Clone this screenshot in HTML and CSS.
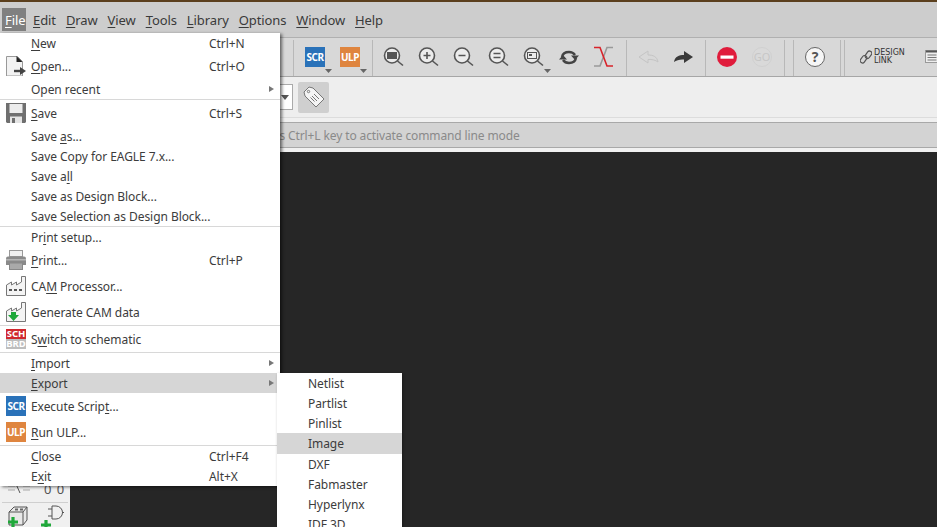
FILE: index.html
```html
<!DOCTYPE html>
<html lang="en">
<head>
<meta charset="utf-8">
<title>EAGLE board editor</title>
<link rel="stylesheet" href="styles.css">
</head>
<body>
<div class="app">
  <div class="topline"></div>
  <nav class="menubar">
    <span class="mb mb-active"><u>F</u>ile</span>
    <span class="mb"><u>E</u>dit</span>
    <span class="mb"><u>D</u>raw</span>
    <span class="mb"><u>V</u>iew</span>
    <span class="mb"><u>T</u>ools</span>
    <span class="mb"><u>L</u>ibrary</span>
    <span class="mb"><u>O</u>ptions</span>
    <span class="mb"><u>W</u>indow</span>
    <span class="mb"><u>H</u>elp</span>
  </nav>
  <div class="toolbar">
    <i class="sep s1"></i>
    <svg class="tb" viewBox="0 0 35 38"><rect x="7" y="9" width="20" height="20" fill="#2a72b9"/><text x="17" y="23" class="t-badge">SCR</text><path d="M27 31h7l-3.500 4z" fill="#666"/></svg>
    <svg class="tb" viewBox="0 0 35 38"><rect x="7" y="9" width="20" height="20" fill="#df853f"/><text x="17" y="23" class="t-badge">ULP</text><path d="M27 31h7l-3.500 4z" fill="#666"/></svg>
    <i class="sep s2"></i>
    <svg class="tb" viewBox="0 0 35 38"><g class="mag"><circle cx="16" cy="17.500" r="7.500"/><path d="M21.500 23l5.500 4.500"/></g><rect x="11" y="14" width="10" height="7" fill="#555"/></svg>
    <svg class="tb" viewBox="0 0 35 38"><g class="mag"><circle cx="16" cy="17.500" r="7.500"/><path d="M21.500 23l5.500 4.500M12.500 17.500h7M16 14v7"/></g></svg>
    <svg class="tb" viewBox="0 0 35 38"><g class="mag"><circle cx="16" cy="17.500" r="7.500"/><path d="M21.500 23l5.500 4.500M12.500 17.500h7"/></g></svg>
    <svg class="tb" viewBox="0 0 35 38"><g class="mag"><circle cx="16" cy="17.500" r="7.500"/><path d="M21.500 23l5.500 4.500M12.500 15.500h7M12.500 19.500h7"/></g></svg>
    <svg class="tb" viewBox="0 0 35 38"><g class="mag"><circle cx="16" cy="17.500" r="7.500"/><path d="M21.500 23l5.500 4.500"/></g><rect x="11.500" y="14.500" width="9" height="6" fill="none" stroke="#555"/><rect x="13" y="16" width="3" height="2" fill="#555"/><path d="M28 31h7l-3.500 4z" fill="#666"/></svg>
    <svg class="tb" viewBox="0 0 35 38"><path d="M11 19q1-5 7-5 4 0 6 3M25 20q-1 5-7 5-4 0-6-3" fill="none" stroke="#444" stroke-width="2.400"/><path d="M20 17.500h8l-4 4.500zM8 21.500h8l-4-4.500z" fill="#444"/></svg>
    <svg class="tb" viewBox="0 0 35 38"><path d="M8 28h6l7-18.500h6" fill="none" stroke="#999" stroke-width="1.600"/><path d="M8 9.500h6l7 18.500h6" fill="none" stroke="#d8232a" stroke-width="1.600"/></svg>
    <i class="sep s3"></i>
    <svg class="tb" viewBox="0 0 35 38"><path d="M8 19l9-6v4c5 0 9 1.500 10 7-2.500-2-6-2.800-10-2.500v3.500z" fill="none" stroke="#c4c4c4"/></svg>
    <svg class="tb" viewBox="0 0 35 38"><path d="M27 19l-9-6v4c-5 0-9 1.500-10 7 2.500-2 6-2.800 10-2.500v3.500z" fill="#3a3a3a"/></svg>
    <i class="sep s4"></i>
    <svg class="tb" viewBox="0 0 35 38"><circle cx="17" cy="19" r="10" fill="#e01c3c"/><rect x="10.500" y="17.500" width="13" height="3.200" fill="#fff"/></svg>
    <svg class="tb" viewBox="0 0 35 38"><circle cx="17" cy="19" r="9.500" fill="#d9d9d9" stroke="#d0d0d0"/><text x="17" y="23" class="t-go">GO</text></svg>
    <i class="sep s5"></i>
    <i class="sep s6"></i>
    <svg class="tb" viewBox="0 0 35 38"><circle cx="17" cy="19" r="9.500" fill="#f6f6f6" stroke="#666"/><text x="17" y="24" class="t-help">?</text></svg>
    <i class="sep s7"></i>
    <i class="sep s8"></i>
    <div class="dlink">
      <svg class="chain" viewBox="0 0 12 14"><g fill="none" stroke="#555" stroke-width="1.200"><rect x="6" y="0.500" width="4.500" height="8" rx="2.200" transform="rotate(35 8 5)"/><rect x="1.500" y="5.500" width="4.500" height="8" rx="2.200" transform="rotate(35 4 9)"/></g></svg>
      <span class="dtext">DESIGN<br>LINK</span>
    </div>
    <svg class="listicon" viewBox="0 0 13 14"><rect x="0.500" y="0.500" width="12" height="12" fill="#eee" stroke="#999"/><path d="M1 1.500h11" stroke="#555" stroke-width="2"/><path d="M2.500 5h9M2.500 7.500h9M2.500 10h9" stroke="#777"/></svg>
  </div>
  <div class="optbar">
    <div class="combo"><span class="combo-arrow"></span></div>
    <button class="tagbtn" type="button" aria-label="Tags">
      <svg viewBox="0 0 22 22" width="22" height="22"><path d="M1 6l5-5 4 1 11 11-8 8L2 10z" fill="#f4f4f4" stroke="#777"/><circle cx="5.500" cy="5.500" r="1.200" fill="none" stroke="#777"/><path d="M11 8l5 5M9 10l5 5M7.500 11.500l4 4" stroke="#777"/></svg>
    </button>
  </div>
  <div class="gap-line"></div>
  <div class="cmdbar">Click or press Ctrl+L key to activate command line mode</div>
  <div class="gap-strip"></div>
  <div class="main">
    <aside class="panel">
      <div class="p-row p-angle">
        <svg viewBox="0 0 22 10" width="22" height="10"><path d="M0 2h7M0 6h7M15 2h7M15 6h7" stroke="#aaa"/><path d="M8 0l4 9" stroke="#555"/></svg>
        <span class="p-num">0 0</span>
      </div>
      <div class="p-rule"></div>
      <div class="p-row p-add">
        <svg viewBox="0 0 24 24" width="24" height="24"><path d="M2 7l5-5h13v13l-4 5H2z" fill="#e8e8e8" stroke="#555"/><path d="M2 7h14v13M16 7l4-5" fill="none" stroke="#555"/><path d="M8 4.500h3M13 4.500h3" stroke="#666" stroke-width="2"/><path d="M1 17h10M6 12v12" stroke="#1fa83a" stroke-width="3.200"/></svg>
        <svg viewBox="0 0 24 24" width="24" height="24"><path d="M12 1h4a6 6 0 0 1 0 13h-4z" fill="#f0f0f0" stroke="#555"/><path d="M22 7.500h2M8 4h4M8 11h4" stroke="#555"/><path d="M1 20h10M6 15v12" stroke="#1fa83a" stroke-width="3.200"/></svg>
      </div>
    </aside>
    <div class="canvas"></div>
  </div>

  <div class="menu">
    <div class="mi"><span class="ic"></span><span><u>N</u>ew</span><span>Ctrl+N</span></div>
    <div class="mi tall"><span class="ic"><svg viewBox="0 0 20 20" width="20" height="20"><path d="M.5.500h11l5 5V20H.500z" fill="#f2f2f2" stroke="#999"/><path d="M10.500 0l6 6h-6z" fill="#222"/><path d="M8 15h6.500" stroke="#444" stroke-width="2.400"/><path d="M14 11l6 4-6 4z" fill="#444"/></svg></span><span><u>O</u>pen...</span><span>Ctrl+O</span></div>
    <div class="mi"><span class="ic"></span><span>Open recent</span><span></span><i class="arrow"></i></div>
    <hr class="msep">
    <div class="mi tall"><span class="ic"><svg viewBox="0 0 20 20" width="20" height="20"><path d="M0 0h20v19l-1 1H1l-1-1z" fill="#6f6f6f"/><rect x="3.500" y="1" width="13" height="9" fill="#ececec"/><rect x="4" y="13.500" width="12" height="6.500" fill="#e4e4e4"/><rect x="6" y="15" width="3" height="5" fill="#6f6f6f"/></svg></span><span><u>S</u>ave</span><span>Ctrl+S</span></div>
    <div class="mi"><span class="ic"></span><span>Save <u>a</u>s...</span></div>
    <div class="mi"><span class="ic"></span><span>Save Copy for EAGLE 7.x...</span></div>
    <div class="mi"><span class="ic"></span><span>Save a<u>l</u>l</span></div>
    <div class="mi"><span class="ic"></span><span>Save as Design Block...</span></div>
    <div class="mi"><span class="ic"></span><span>Save Selection as Design Block...</span></div>
    <hr class="msep">
    <div class="mi"><span class="ic"></span><span>Pr<u>i</u>nt setup...</span></div>
    <div class="mi tall"><span class="ic"><svg viewBox="0 0 20 20" width="20" height="20"><rect x="3.500" y=".5" width="13" height="6" fill="#f0f0f0" stroke="#999"/><path d="M0 8.500q0-2 2-2h16q2 0 2 2V15H0z" fill="#8a8a8a"/><rect x="0" y="9" width="20" height="1.500" fill="#b5b5b5"/><rect x="3.500" y="13" width="13" height="6.500" fill="#a9a9a9" stroke="#888"/></svg></span><span><u>P</u>rint...</span><span>Ctrl+P</span></div>
    <div class="mi tall"><span class="ic"><svg viewBox="0 0 20 20" width="20" height="20"><path d="M.5 19.500V9l5-3v3l5-3v3l5-3V.500h4v19z" fill="#f4f4f4" stroke="#777"/><path d="M3 14h3M8 14h3M13 14h3" stroke="#555" stroke-width="2"/></svg></span><span>CA<u>M</u> Processor...</span></div>
    <div class="mi tall"><span class="ic"><svg viewBox="0 0 20 20" width="20" height="20"><path d="M.5 19.500V9l5-3v3l5-3v3l5-3V.500h4v19z" fill="#f4f4f4" stroke="#777"/><path d="M4 11h5v3h3l-5.500 6L1 14h3z" transform="translate(1 -1)" fill="#1fa83a"/></svg></span><span>Generate CAM data</span></div>
    <hr class="msep">
    <div class="mi tall"><span class="ic"><span class="schbrd"><b class="sb-s">SCH</b><b class="sb-b">BRD</b></span></span><span>S<u>w</u>itch to schematic</span></div>
    <hr class="msep">
    <div class="mi"><span class="ic"></span><span><u>I</u>mport</span><span></span><i class="arrow"></i></div>
    <div class="mi hl"><span class="ic"></span><span><u>E</u>xport</span><span></span><i class="arrow"></i></div>
    <div class="mi tall"><span class="ic"><b class="badge scr">SCR</b></span><span>Execute Scrip<u>t</u>...</span></div>
    <div class="mi tall"><span class="ic"><b class="badge ulp">ULP</b></span><span><u>R</u>un ULP...</span></div>
    <hr class="msep">
    <div class="mi"><span class="ic"></span><span><u>C</u>lose</span><span>Ctrl+F4</span></div>
    <div class="mi"><span class="ic"></span><span>E<u>x</u>it</span><span>Alt+X</span></div>
  </div>

  <div class="submenu">
    <div class="si">Netlist</div>
    <div class="si">Partlist</div>
    <div class="si">Pinlist</div>
    <div class="si si-hl">Image</div>
    <div class="si">DXF</div>
    <div class="si">Fabmaster</div>
    <div class="si">Hyperlynx</div>
    <div class="si">IDF 3D</div>
  </div>
</div>
</body>
</html>
```

FILE: styles.css
```css
* { box-sizing: border-box; }
html, body { margin: 0; height: 527px; overflow: hidden; }
body { font-family: "Noto Sans", sans-serif; font-size: 12px; color: #3c3c3c; }
.app { position: relative; width: 937px; height: 527px; overflow: hidden; display: flex; flex-direction: column; background: #f0f0f0; }
u { text-underline-offset: 2px; }

.topline { height: 2px; flex: none; background: #5b3f1d; }
.menubar { height: 36px; flex: none; background: #cdcdcd; border-bottom: 1px solid #b0b0b0; display: flex; padding: 6px 0 0 2px; font-size: 13px; letter-spacing: -.1px; }
.mb { height: 23px; line-height: 25px; padding: 0 3px; margin-right: 4px; color: #3a3a3a; }
.mb-active { width: 24px; padding-right: 0; background: #808080; color: #fff; }

.toolbar { height: 39px; flex: none; background: #d8d8d8; border-bottom: 1px solid #a6a6a6; display: flex; align-items: flex-start; padding-left: 293px; }
.tb { width: 35px; height: 38px; flex: none; display: block; }
.sep { width: 1px; height: 36px; margin-top: 2px; flex: none; background: #b8b8b8; }
.s1 { margin-right: 4px; }
.s2 { margin: 2px 3px 0 4px; }
.s3 { margin: 2px 4px 0 5px; }
.s4 { margin: 2px 4px 0 4px; }
.s5 { margin: 2px 0 0 4px; }
.s6 { margin: 2px 4px 0 8px; }
.s7 { margin: 2px 0 0 7px; }
.s8 { margin: 2px 0 0 3px; }
.mag { fill: none; stroke: #555; stroke-width: 1.600; }
.mag circle { fill: #ececec; }
.t-badge { fill: #fff; font: 700 10px "Noto Sans", sans-serif; text-anchor: middle; letter-spacing: -.5px; }
.t-go { fill: #c6c6c6; font: 400 11px "Noto Sans", sans-serif; text-anchor: middle; }
.t-help { fill: #555; font: 700 14px "Noto Sans", sans-serif; text-anchor: middle; }
.dlink { display: flex; align-items: center; gap: 2px; margin-left: 15px; height: 38px; flex: none; width: 65px; }
.chain { width: 12px; height: 14px; flex: none; }
.dtext { font: 8px/8px "DejaVu Sans", sans-serif; color: #333; }
.listicon { width: 13px; height: 14px; flex: none; margin-top: 12px; }

.optbar { height: 41px; flex: none; background: #eeeeee; border-bottom: 1px solid #dcdcdc; display: flex; align-items: center; padding-left: 200px; }
.combo { width: 93px; height: 26px; background: #fff; border: 1px solid #aaa; position: relative; flex: none; }
.combo-arrow { position: absolute; right: 3px; top: 10px; border-left: 4px solid transparent; border-right: 4px solid transparent; border-top: 5px solid #555; }
.tagbtn { width: 31px; height: 31px; margin-left: 5px; padding: 0; border: 0; border-radius: 2px; background: #cfcfcf; display: flex; align-items: center; justify-content: center; flex: none; }
.gap-line { height: 4px; flex: none; background: #f0f0f0; }
.cmdbar { height: 26px; flex: none; background: #d3d3d3; border-top: 1px solid #a8a8a8; border-bottom: 1px solid #a8a8a8; line-height: 25px; padding-left: 212px; color: #8a8a8a; white-space: nowrap; letter-spacing: -.12px; }
.gap-strip { height: 4px; flex: none; background: #f0f0f0; }

.main { flex: 1; min-height: 0; display: flex; }
.panel { width: 70px; flex: none; background: #f0f0f0; display: flex; flex-direction: column; justify-content: flex-end; overflow: hidden; }
.p-row { flex: none; display: flex; }
.p-angle { height: 16px; padding: 0 0 8px 8px; align-items: flex-end; gap: 14px; }
.p-num { font-size: 13px; line-height: 10px; color: #555; letter-spacing: 1px; }
.p-rule { height: 1px; margin: 0 2px; background: #cfcfcf; flex: none; }
.p-add { height: 24px; padding: 2px 0 0 7px; gap: 9px; align-items: flex-start; }
.canvas { flex: 1; background: #262626; }

.menu { position: absolute; left: 0; top: 33px; width: 280px; background: #fff; box-shadow: 2px 1px 3px rgba(0,0,0,.55); }
.mi { height: 20px; display: grid; grid-template-columns: 31px 178px 1fr 11px; align-items: center; color: #3c3c3c; white-space: nowrap; letter-spacing: -.06px; }
.mi.tall { height: 26px; }
.mi.hl { background: #d6d6d6; }
.ic { display: flex; align-items: center; padding-left: 6px; }
.ic svg { display: block; }
.arrow { grid-column: 4; width: 0; height: 0; border-left: 5px solid #777; border-top: 3.500px solid transparent; border-bottom: 3.500px solid transparent; }
.msep { height: 1px; margin: 0; border: 0; background: #d8d8d8; }
.badge { display: block; width: 20px; height: 20px; line-height: 20px; text-align: center; font-size: 10px; font-weight: 700; color: #fff; letter-spacing: -.5px; }
.scr { background: #2a72b9; }
.ulp { background: #df853f; }
.schbrd { display: block; width: 20px; }
.schbrd b { display: block; height: 10px; line-height: 10px; text-align: center; font-size: 9.500px; color: #fff; }
.sb-s { background: #d0272d; }
.sb-b { background: #bdbdbd; }

.submenu { position: absolute; left: 277px; top: 373px; width: 125px; height: 160px; background: #fff; box-shadow: 1px 1px 3px rgba(0,0,0,.3); }
.si { height: 20px; line-height: 21px; padding-left: 31px; color: #3c3c3c; letter-spacing: -.06px; }
.si-hl { height: 21px; line-height: 21px; background: #d6d6d6; }
```
